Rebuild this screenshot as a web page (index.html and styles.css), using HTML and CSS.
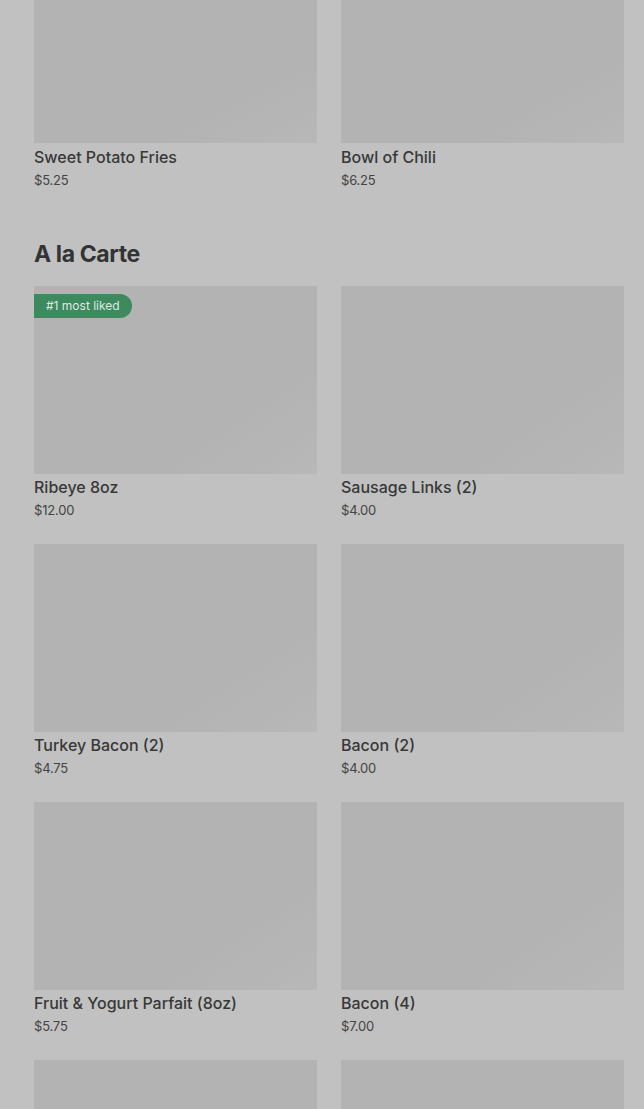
FILE: index.html
```html
<!DOCTYPE html>
<html>
<head>
<meta charset="utf-8">
<link rel="stylesheet" href="styles.css">
</head>
<body>
<main class="page">
  <section class="section section-first">
    <div class="grid">
      <div class="card">
        <div class="thumb thumb-partial"></div>
        <div class="name">Sweet Potato Fries</div>
        <div class="price">$5.25</div>
      </div>
      <div class="card">
        <div class="thumb thumb-partial"></div>
        <div class="name">Bowl of Chili</div>
        <div class="price">$6.25</div>
      </div>
    </div>
  </section>
  <section class="section">
    <h2 class="heading">A la Carte</h2>
    <div class="grid">
      <div class="card">
        <div class="thumb"><span class="badge">#1 most liked</span></div>
        <div class="name">Ribeye 8oz</div>
        <div class="price">$12.00</div>
      </div>
      <div class="card">
        <div class="thumb"></div>
        <div class="name">Sausage Links (2)</div>
        <div class="price">$4.00</div>
      </div>
      <div class="card">
        <div class="thumb"></div>
        <div class="name">Turkey Bacon (2)</div>
        <div class="price">$4.75</div>
      </div>
      <div class="card">
        <div class="thumb"></div>
        <div class="name">Bacon (2)</div>
        <div class="price">$4.00</div>
      </div>
      <div class="card">
        <div class="thumb"></div>
        <div class="name">Fruit &amp; Yogurt Parfait (8oz)</div>
        <div class="price">$5.75</div>
      </div>
      <div class="card">
        <div class="thumb"></div>
        <div class="name">Bacon (4)</div>
        <div class="price">$7.00</div>
      </div>
      <div class="card">
        <div class="thumb"></div>
      </div>
      <div class="card">
        <div class="thumb"></div>
      </div>
    </div>
  </section>
</main>
</body>
</html>
```
FILE: styles.css
```css
html, body {
  margin: 0;
  padding: 0;
  background: #c1c1c1;
  overflow: hidden;
}
body {
  font-family: Inter, "Noto Sans", "Liberation Sans", sans-serif;
  color: #333333;
}
.page {
  padding: 0 20px 0 34px;
}
.grid {
  display: grid;
  grid-template-columns: 283px 283px;
  column-gap: 24px;
  row-gap: 22px;
}
.thumb {
  position: relative;
  height: 188px;
  background: linear-gradient(to bottom right, #b3b3b3 0%, #b3b3b3 72%, #b8b8b8 100%);
}
.thumb-partial {
  height: 143px;
}
.section-first .name {
  margin-top: 3px;
}
.badge {
  position: absolute;
  left: 0;
  top: 8px;
  height: 24px;
  line-height: 24px;
  padding: 0 12px 0 12px;
  background: #3c8a5d;
  color: #dfe9e2;
  font-size: 12px;
  border-radius: 0 12px 12px 0;
}
.name {
  margin-top: 2px;
  font-size: 16px;
  line-height: 22px;
  font-weight: 500;
  color: #383838;
}
.price {
  font-size: 13px;
  line-height: 24px;
  color: #444444;
  letter-spacing: -0.2px;
}
.heading {
  margin: 46px 0 16px;
  font-size: 23px;
  line-height: 32px;
  font-weight: 700;
  letter-spacing: -0.4px;
  color: #333333;
}
```
